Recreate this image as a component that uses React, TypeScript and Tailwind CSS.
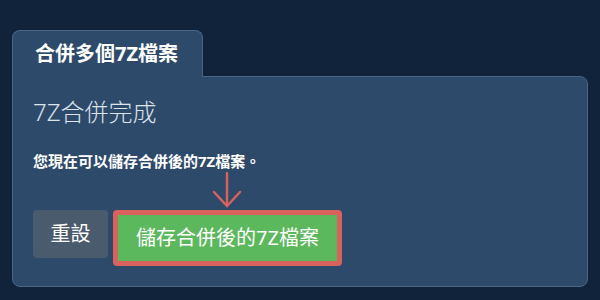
export default function App() {
  return (
    <div
      className="w-[600px] h-[300px] bg-[#11233a] pt-[30px] px-[12px]"
      style={{ fontFamily: '"Noto Sans", "Noto Sans CJK TC", sans-serif' }}
    >
      <div className="relative z-10 -mb-px w-[191px] h-[47px] bg-[#2d4a6b] border border-b-0 border-[#4b6584] rounded-t-lg flex items-center pl-[22px]">
        <span className="text-white font-bold text-[20px] leading-none">合併多個7Z檔案</span>
      </div>
      <div className="h-[211px] bg-[#2d4a6b] border border-[#4b6584] rounded-b-lg rounded-tr-lg px-[20px] pt-[23px]">
        <h2 className="text-[#dde3ea] text-[24px] font-light leading-none">7Z合併完成</h2>
        <p className="mt-[30px] text-white text-[15px] font-bold leading-none">您現在可以儲存合併後的7Z檔案。</p>
        <div className="ml-[179px] mt-[3px] h-[38px] w-[30px]">
          <svg width="30" height="38" viewBox="0 0 30 38" fill="none" stroke="#d9625d" strokeWidth="2.4" strokeLinecap="round">
            <path d="M15 1 V34" />
            <path d="M2 20 L15 34 L28 20" />
          </svg>
        </div>
        <div className="flex items-start gap-[5px]">
          <button className="w-[75px] h-[48px] rounded bg-[#4a5b6e] text-white text-[20px]">重設</button>
          <button className="w-[229px] h-[56px] rounded-[4px] border-[5px] border-[#d9625d] bg-[#5cb85c] text-white text-[20px]">
            儲存合併後的7Z檔案
          </button>
        </div>
      </div>
    </div>
  );
}
